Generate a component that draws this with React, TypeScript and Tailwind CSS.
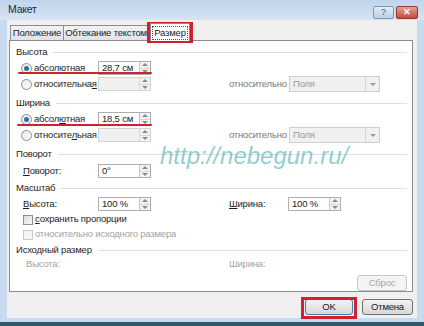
import React from 'react';

const font = { fontFamily: '"Liberation Sans", Arial, sans-serif' };

const U = ({ children }: { children: React.ReactNode }) => <span className="underline underline-offset-1">{children}</span>;

const Arrows = ({ disabled }: { disabled?: boolean }) => (
  <div className={`w-[11px] h-full flex flex-col border-l ${disabled ? 'border-[#dadada]' : 'border-[#c4c4c4]'} bg-[#f2f2f2]`}>
    <div className="flex-1 flex items-center justify-center border-b border-[#d6d6d6]">
      <div className="w-0 h-0 border-l-[3px] border-r-[3px] border-b-[3px] border-l-transparent border-r-transparent border-b-[#8a8a8a]" />
    </div>
    <div className="flex-1 flex items-center justify-center">
      <div className="w-0 h-0 border-l-[3px] border-r-[3px] border-t-[3px] border-l-transparent border-r-transparent border-t-[#8a8a8a]" />
    </div>
  </div>
);

const SpinInput = ({ value, disabled }: { value?: string; disabled?: boolean }) => (
  <div className={`w-[53px] h-[14px] flex border ${disabled ? 'border-[#d4d4d4] bg-[#f0f0f0]' : 'border-[#abadb3] bg-white'}`}>
    <div className="flex-1 pl-[3px] text-[9.5px] leading-[12px] text-[#1a1a1a]">{value}</div>
    <Arrows disabled={disabled} />
  </div>
);

const Radio = ({ checked }: { checked?: boolean }) => (
  <div className="w-[11px] h-[11px] rounded-full border border-[#8e8f8f] bg-gradient-to-br from-[#e9e9e9] to-[#fafafa] flex items-center justify-center">
    {checked && <div className="w-[5px] h-[5px] rounded-full bg-[#2f6db3]" />}
  </div>
);

const Check = ({ disabled }: { disabled?: boolean }) => (
  <div className={`w-[10px] h-[10px] border ${disabled ? 'border-[#c9c9c9] bg-[#f4f4f4]' : 'border-[#8e8f8f] bg-gradient-to-br from-[#dcdcdc] to-[#f7f7f7]'}`} />
);

const Header = ({ title }: { title: string }) => (
  <div className="h-[16px] flex items-center pl-[6px] pr-[5px] gap-[6px]">
    <span className="text-[9.5px] text-[#1e1e1e] whitespace-nowrap">{title}</span>
    <div className="flex-1 h-px bg-[#dcdfe3]" />
  </div>
);

const Dropdown = () => (
  <div className="w-[91px] h-[16px] flex border border-[#cfcfcf] bg-[#f0f0f0]">
    <div className="flex-1 pl-[3px] text-[9.5px] leading-[14px] text-[#9a9a9a]">Поля</div>
    <div className="w-[14px] border-l border-[#d8d8d8] flex items-center justify-center">
      <div className="w-0 h-0 border-l-[3px] border-r-[3px] border-t-[3px] border-l-transparent border-r-transparent border-t-[#9a9a9a]" />
    </div>
  </div>
);

const RadioRow = ({ label, checked, value, disabled, right }: { label: React.ReactNode; checked?: boolean; value?: string; disabled?: boolean; right?: boolean }) => (
  <div className="h-[16px] flex items-center pl-[11px]">
    <Radio checked={checked} />
    <span className="ml-[2px] w-[64px] text-[9.5px] text-[#1e1e1e] whitespace-nowrap">{label}</span>
    <SpinInput value={value} disabled={disabled} />
    {right && (
      <>
        <span className="ml-[78px] w-[60px] text-[9.5px] text-[#7a7a7a] whitespace-nowrap">относительно</span>
        <Dropdown />
      </>
    )}
  </div>
);

const Btn = ({ children, w, disabled, def }: { children: React.ReactNode; w: string; disabled?: boolean; def?: boolean }) => (
  <div
    className={`${w} h-[16px] rounded-[3px] border flex items-center justify-center text-[9.5px] ${
      disabled
        ? 'border-[#c3c6c9] bg-[#f4f4f4] text-[#a6a6a6]'
        : def
        ? 'border-[#3c7fb1] bg-gradient-to-b from-[#f2f2f2] to-[#d8d8d8] text-[#1a1a1a]'
        : 'border-[#707070] bg-gradient-to-b from-[#f2f2f2] to-[#d8d8d8] text-[#1a1a1a]'
    }`}
  >
    {children}
  </div>
);

export default function App() {
  return (
    <div style={font} className="w-[424px] h-[326px] relative overflow-hidden bg-[#c8daef] flex flex-col tracking-[-0.2px]">
      <div className="h-[20px] flex items-center justify-between pl-[8px] pr-[6px] bg-gradient-to-b from-[#c0d4ec] to-[#d6e4f4]">
        <span className="text-[10.5px] text-[#1b2a3e]">Макет</span>
        <div className="flex gap-[2px] mt-[5px]">
          <div className="w-[21px] h-[13px] rounded-[2px] border border-[#7c98bd] bg-gradient-to-b from-[#e2ebf6] to-[#bccfe6] flex items-center justify-center text-[9px] leading-none text-[#4a5f7c]">?</div>
          <div className="w-[22px] h-[13px] rounded-[2px] border border-[#8d3a32] bg-gradient-to-b from-[#e5a093] to-[#c7473a] flex items-center justify-center text-[9px] font-bold leading-none text-white">✕</div>
        </div>
      </div>

      <div className="flex-1 mx-[7px] bg-[#f0f0f0] flex flex-col pl-[2px] pr-[4px]">
        <div className="h-[20px] flex items-end pl-[1px]">
          <div className="w-[54px] h-[15px] border border-b-0 border-[#898c95] bg-gradient-to-b from-[#f2f2f2] to-[#e3e3e3] text-[9.5px] leading-[14px] text-center text-[#1e1e1e] whitespace-nowrap">Положение</div>
          <div className="w-[85px] h-[15px] border border-b-0 border-l-0 border-[#898c95] bg-gradient-to-b from-[#f2f2f2] to-[#e3e3e3] text-[9.5px] leading-[14px] text-center text-[#1e1e1e] whitespace-nowrap">Обтекание текстом</div>
          <div className="w-[40px] h-[18px] -mb-px ml-[1px] relative z-10 border border-b-0 border-[#898c95] bg-white flex items-center justify-center">
            <span className="text-[9.5px] leading-[12px] px-[1px] outline-1 outline-dotted outline-[#555] text-[#1e1e1e]">Размер</span>
          </div>
        </div>

        <div className="w-[404px] h-[252px] border border-[#898c95] bg-white flex flex-col pt-[3px]">
          <Header title="Высота" />
          <RadioRow checked value="28,7 см" label={<><U>а</U>бсолютная</>} />
          <RadioRow disabled right label={<>относительна<U>я</U></>} />
          <div className="h-[3px]" />
          <Header title="Ширина" />
          <RadioRow checked value="18,5 см" label={<>абсол<U>ю</U>тная</>} />
          <RadioRow disabled right label={<>относите<U>л</U>ьная</>} />
          <div className="h-[3px]" />
          <Header title="Поворот" />
          <div className="h-[18px] flex items-center pl-[13px]">
            <span className="w-[75px] text-[9.5px] text-[#1e1e1e]"><U>П</U>оворот:</span>
            <SpinInput value="0°" />
          </div>
          <Header title="Масштаб" />
          <div className="h-[16px] flex items-center pl-[13px]">
            <span className="w-[75px] text-[9.5px] text-[#1e1e1e]"><U>В</U>ысота:</span>
            <SpinInput value="100 %" />
            <span className="ml-[78px] w-[59px] text-[9.5px] text-[#1e1e1e]"><U>Ш</U>ирина:</span>
            <SpinInput value="100 %" />
          </div>
          <div className="h-[15px] flex items-center pl-[13px] gap-[2px]">
            <Check />
            <span className="text-[9.5px] text-[#1e1e1e]"><U>с</U>охранить пропорции</span>
          </div>
          <div className="h-[15px] flex items-center pl-[13px] gap-[2px]">
            <Check disabled />
            <span className="text-[9.5px] text-[#a3a3a3]">относительно исходного размера</span>
          </div>
          <Header title="Исходный размер" />
          <div className="h-[12px] flex items-center pl-[16px]">
            <span className="w-[203px] text-[9.5px] text-[#a3a3a3]">Высота:</span>
            <span className="text-[9.5px] text-[#a3a3a3]">Ширина:</span>
          </div>
          <div className="flex justify-end pr-[5px] mt-[5px]">
            <Btn w="w-[50px]" disabled>Сброс</Btn>
          </div>
        </div>

        <div className="flex justify-end gap-[9px] pt-[7px]">
          <Btn w="w-[48px]" def>OK</Btn>
          <Btn w="w-[51px]">Отмена</Btn>
        </div>
      </div>

      <div className="h-[4px] bg-[#c8daef]" />
      <div className="h-[4px] bg-[#2b5a68]" />

      {/* annotations */}
      <div className="absolute left-[147px] top-[22px] w-[46px] h-[21px] border-[3px] border-[#d3202f]" />
      <div className="absolute left-[18px] top-[72px] w-[134px] h-[2px] bg-[#d3202f] rounded-full" />
      <div className="absolute left-[17px] top-[124px] w-[135px] h-[2px] bg-[#d3202f] rounded-full" />
      <div className="absolute left-[301px] top-[297px] w-[56px] h-[22px] border-[3px] border-[#d3202f]" />
      <div className="absolute left-[160px] top-[138px] text-[24px] italic tracking-normal text-[#5fb8b8]/70 pointer-events-none">
        http://nebegun.ru/
      </div>
    </div>
  );
}
